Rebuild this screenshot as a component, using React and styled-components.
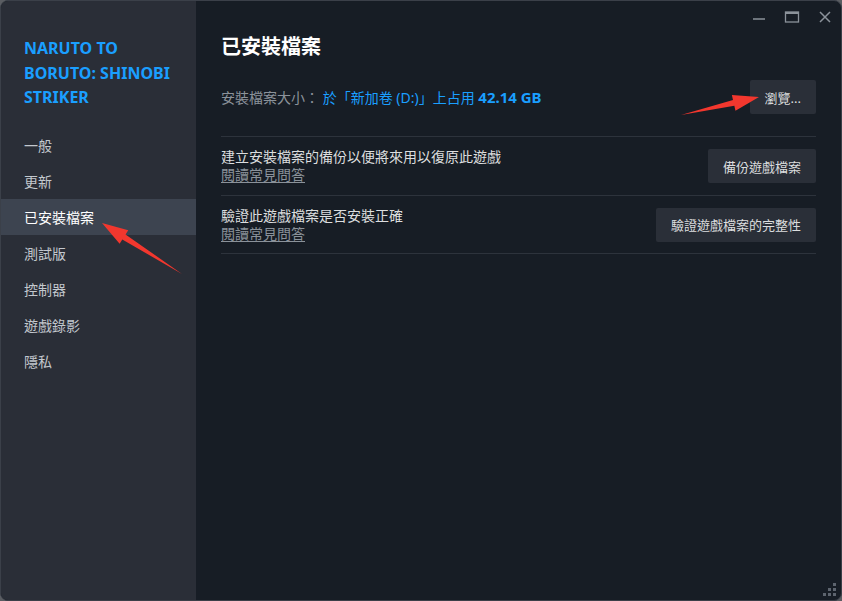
import React from 'react';
import styled, { createGlobalStyle } from 'styled-components';

const GlobalStyle = createGlobalStyle`
  html, body {
    margin: 0;
    padding: 0;
    background: #5a5d62;
  }
  body {
    font-family: "Noto Sans", "Noto Sans CJK TC", sans-serif;
  }
`;

const SWindow = styled.div`
  position: relative;
  display: flex;
  width: 842px;
  height: 601px;
  box-sizing: border-box;
  overflow: hidden;
  border: 1px solid #3b4049;
  border-radius: 8px;
  background-color: #171d25;
`;

const SSidebar = styled.nav`
  display: flex;
  flex-direction: column;
  width: 195px;
  flex-shrink: 0;
  background-color: #2a2e37;
`;

const SGameTitle = styled.h1`
  margin: 35px 0 17px;
  padding: 0 23px;
  font-size: 16px;
  line-height: 24.5px;
  font-weight: 700;
  color: #1a9fff;
`;

const SNavItem = styled.div`
  height: 36px;
  padding: 0 23px;
  display: flex;
  align-items: center;
  font-size: 14px;
  color: ${({ $active }) => ($active ? '#ffffff' : '#c3c8ce')};
  background-color: ${({ $active }) => ($active ? '#3d4450' : 'transparent')};
`;

const SMain = styled.main`
  flex: 1;
  display: flex;
  flex-direction: column;
  padding: 31px 25px 0 25px;
`;

const SHeading = styled.h2`
  margin: 0 0 18px;
  font-size: 20px;
  line-height: 30px;
  font-weight: 700;
  color: #ffffff;
`;

const SSizeRow = styled.div`
  display: flex;
  align-items: center;
  justify-content: space-between;
  padding-bottom: 22px;
  border-bottom: 1px solid #2d333c;
`;

const SSizeText = styled.div`
  font-size: 14px;
  color: #8b929a;
`;

const SBlue = styled.span`
  color: #1a9fff;
  font-weight: ${({ $bold }) => ($bold ? 700 : 400)};
  font-size: ${({ $bold }) => ($bold ? '15px' : 'inherit')};
`;

const SButton = styled.button`
  height: 34px;
  padding: 0 15px;
  border: none;
  border-radius: 2px;
  font-family: inherit;
  font-size: 13px;
  color: #dcdedf;
  background-color: #2a2f38;
`;

const SOption = styled.div`
  display: flex;
  align-items: center;
  justify-content: space-between;
  height: ${({ $last }) => ($last ? '57px' : '58px')};
  border-bottom: 1px solid #2d333c;
`;

const SOptionText = styled.div`
  display: flex;
  flex-direction: column;
  font-size: 14px;
  line-height: 18px;
  color: #dcdedf;
`;

const SFaqLink = styled.a`
  color: #8b929a;
  text-decoration: underline;
  text-underline-offset: 2px;
`;

const SControls = styled.div`
  position: absolute;
  top: 8px;
  right: 5px;
  display: flex;
  gap: 11px;
`;

const SControlBtn = styled.div`
  width: 22px;
  height: 16px;
  display: flex;
  align-items: center;
  justify-content: center;
`;

const SGrip = styled.svg`
  position: absolute;
  right: 4px;
  bottom: 3px;
`;

const SOverlay = styled.svg`
  position: absolute;
  left: 0;
  top: 0;
  pointer-events: none;
`;

function Arrow({ x1, y1, x2, y2 }) {
  // red callout arrow, tapered shaft with a filled head
  const dx = x2 - x1;
  const dy = y2 - y1;
  const len = Math.hypot(dx, dy);
  const ux = dx / len;
  const uy = dy / len;
  const px = -uy;
  const py = ux;
  const head = 26;
  const hw = 8;
  const bx = x2 - ux * head;
  const by = y2 - uy * head;
  const sw = 3;
  const pts = [
    [x1, y1],
    [bx + px * sw, by + py * sw],
    [bx + px * hw, by + py * hw],
    [x2, y2],
    [bx - px * hw, by - py * hw],
    [bx - px * sw, by - py * sw],
  ]
    .map((p) => p.join(','))
    .join(' ');
  return <polygon points={pts} fill="#f2372e" />;
}

const NAV = ['一般', '更新', '已安裝檔案', '測試版', '控制器', '遊戲錄影', '隱私'];

function App() {
  return (
    <>
      <GlobalStyle />
      <SWindow>
        <SSidebar>
          <SGameTitle>
            NARUTO TO
            <br />
            BORUTO: SHINOBI
            <br />
            STRIKER
          </SGameTitle>
          {NAV.map((item) => (
            <SNavItem key={item} $active={item === '已安裝檔案'}>
              {item}
            </SNavItem>
          ))}
        </SSidebar>

        <SMain>
          <SHeading>已安裝檔案</SHeading>
          <SSizeRow>
            <SSizeText>
              安裝檔案大小： <SBlue>於「新加卷 (D:)」上占用 </SBlue>
              <SBlue $bold>42.14 GB</SBlue>
            </SSizeText>
            <SButton type="button">瀏覽...</SButton>
          </SSizeRow>
          <SOption>
            <SOptionText>
              建立安裝檔案的備份以便將來用以復原此遊戲
              <SFaqLink>閱讀常見問答</SFaqLink>
            </SOptionText>
            <SButton type="button">備份遊戲檔案</SButton>
          </SOption>
          <SOption $last>
            <SOptionText>
              驗證此遊戲檔案是否安裝正確
              <SFaqLink>閱讀常見問答</SFaqLink>
            </SOptionText>
            <SButton type="button">驗證遊戲檔案的完整性</SButton>
          </SOption>
        </SMain>

        <SControls>
          <SControlBtn>
            <svg width="14" height="14" viewBox="0 0 14 14">
              <path d="M1 9h12" stroke="#8b929a" strokeWidth="1.5" />
            </svg>
          </SControlBtn>
          <SControlBtn>
            <svg width="16" height="14" viewBox="0 0 16 14">
              <rect x="1.5" y="2" width="13" height="10" fill="none" stroke="#8b929a" strokeWidth="1.3" />
              <path d="M1.5 3h13" stroke="#8b929a" strokeWidth="2" />
            </svg>
          </SControlBtn>
          <SControlBtn>
            <svg width="14" height="14" viewBox="0 0 14 14">
              <path d="M2 2l10 10M12 2L2 12" stroke="#8b929a" strokeWidth="1.5" />
            </svg>
          </SControlBtn>
        </SControls>

        <SGrip width="14" height="14" viewBox="0 0 14 14">
          <g fill="#5d646e">
            <rect x="10" y="0" width="3" height="3" />
            <rect x="5" y="5" width="3" height="3" />
            <rect x="10" y="5" width="3" height="3" />
            <rect x="0" y="10" width="3" height="3" />
            <rect x="5" y="10" width="3" height="3" />
            <rect x="10" y="10" width="3" height="3" />
          </g>
        </SGrip>

        <SOverlay width="842" height="601">
          <Arrow x1={181} y1={273} x2={101} y2={222} />
          <Arrow x1={680} y1={114} x2={758} y2={96} />
        </SOverlay>
      </SWindow>
    </>
  );
}

export default App;
